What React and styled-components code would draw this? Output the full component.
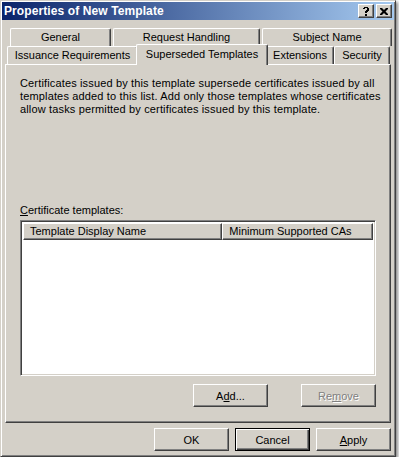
import React from 'react';
import styled, { createGlobalStyle } from 'styled-components';

const GlobalStyle = createGlobalStyle`
  html, body { margin: 0; padding: 0; background: #ffffff; }
  body { font-family: "Liberation Sans", Arial, sans-serif; font-size: 11px; color: #000; }
`;

const Window = styled.div`
  width: 396px;
  height: 457px;
  box-sizing: border-box;
  background: #d4d0c8;
  border: 1px solid;
  border-color: #d4d0c8 #404040 #404040 #d4d0c8;
  box-shadow: inset 1px 1px 0 #fff, inset -1px -1px 0 #808080, 2px 2px 3px rgba(0, 0, 0, 0.45);
  padding: 1px;
  display: flex;
  flex-direction: column;
`;

const TitleBar = styled.div`
  height: 18px;
  display: flex;
  align-items: center;
  background: linear-gradient(to right, #0a246a, #a6caf0);
  padding: 0 2px 0 2px;
`;

const Title = styled.div`
  flex: 1;
  color: #fff;
  font-weight: bold;
  font-size: 12px;
  letter-spacing: 0.1px;
`;

const CaptionButton = styled.div`
  width: 16px;
  height: 14px;
  box-sizing: border-box;
  margin-left: ${(p) => (p.$gap ? 2 : 0)}px;
  background: #d4d0c8;
  border: 1px solid;
  border-color: #fff #404040 #404040 #fff;
  box-shadow: inset -1px -1px 0 #808080;
  display: flex;
  align-items: center;
  justify-content: center;
`;

const Body = styled.div`
  flex: 1;
  display: flex;
  flex-direction: column;
  padding: 8px 1px 0 3px;
`;

const TabRow = styled.div`
  display: flex;
  gap: ${(p) => p.$gap}px;
  padding-left: ${(p) => p.$indent}px;
  height: ${(p) => p.$h}px;
  align-items: flex-end;
  position: relative;
  z-index: ${(p) => p.$z || 0};
`;

const Tab = styled.div`
  width: ${(p) => p.$w}px;
  height: ${(p) => (p.$active ? 21 : 18)}px;
  margin-bottom: ${(p) => (p.$active ? -1 : 0)}px;
  margin-left: ${(p) => (p.$active ? -2 : 0)}px;
  margin-right: ${(p) => (p.$active ? -2 : 0)}px;
  box-sizing: border-box;
  background: #d4d0c8;
  border-top: 1px solid #fff;
  border-left: 1px solid #fff;
  border-right: 1px solid #404040;
  border-radius: 2px 2px 0 0;
  box-shadow: inset -1px 0 0 #808080;
  display: flex;
  justify-content: center;
  padding-top: ${(p) => (p.$active ? 3 : 2)}px;
  white-space: nowrap;
  position: relative;
  z-index: ${(p) => (p.$active ? 2 : 1)};
`;

const Panel = styled.div`
  height: 359px;
  margin-right: 2px;
  box-sizing: border-box;
  border: 1px solid;
  border-color: #fff #404040 #404040 #fff;
  box-shadow: inset -1px -1px 0 #808080;
  padding: 12px 14px 0 14px;
  display: flex;
  flex-direction: column;
`;

const Description = styled.p`
  margin: 0;
  line-height: 13px;
  letter-spacing: 0.15px;
  white-space: nowrap;
`;

const Label = styled.div`
  margin-top: 88px;
  line-height: 13px;
`;

const ListBox = styled.div`
  margin-top: 3px;
  height: 156px;
  box-sizing: border-box;
  background: #fff;
  border: 1px solid;
  border-color: #808080 #fff #fff #808080;
  box-shadow: inset 1px 1px 0 #404040, inset -1px -1px 0 #d4d0c8;
  padding: 2px 2px 0 2px;
`;

const HeaderRow = styled.div`
  display: flex;
  height: 17px;
  background: #fff;
`;

const HeaderCell = styled.div`
  width: ${(p) => p.$w}px;
  box-sizing: border-box;
  background: #d4d0c8;
  border: 1px solid;
  border-color: #fff #404040 #404040 #fff;
  box-shadow: inset -1px -1px 0 #808080;
  padding: 1px 0 0 6px;
  white-space: nowrap;
`;

const ButtonRow = styled.div`
  display: flex;
  justify-content: flex-end;
  gap: ${(p) => p.$gap}px;
  margin-top: ${(p) => p.$top}px;
  padding-right: ${(p) => p.$right || 0}px;
`;

const Button = styled.div`
  width: ${(p) => p.$w || 75}px;
  height: 23px;
  box-sizing: border-box;
  background: #d4d0c8;
  border: 1px solid;
  border-color: ${(p) => (p.$default ? '#000' : '#fff #404040 #404040 #fff')};
  box-shadow: ${(p) =>
    p.$default
      ? 'inset 1px 1px 0 #fff, inset -1px -1px 0 #404040, inset -2px -2px 0 #808080'
      : 'inset -1px -1px 0 #808080'};
  display: flex;
  align-items: center;
  justify-content: center;
  color: ${(p) => (p.$disabled ? '#808080' : '#000')};
  text-shadow: ${(p) => (p.$disabled ? '1px 1px 0 #fff' : 'none')};
`;

const Mn = styled.span`
  text-decoration: underline;
`;

export default function App() {
  return (
    <>
      <GlobalStyle />
      <Window>
        <TitleBar>
          <Title>Properties of New Template</Title>
          <CaptionButton>
            <svg width="8" height="9" viewBox="0 0 8 9">
              <path d="M1 1h1V0h4v1h1v3H6v1H5v1H3V4h1V3h1V1H3v1H1z M3 7h2v2H3z" fill="#000" />
            </svg>
          </CaptionButton>
          <CaptionButton $gap>
            <svg width="8" height="7" viewBox="0 0 8 7">
              <path d="M0 0h2l2 2 2-2h2v1L5.5 3.5 8 6v1H6L4 5 2 7H0V6l2.5-2.5L0 1z" fill="#000" />
            </svg>
          </CaptionButton>
        </TitleBar>
        <Body>
          <TabRow $indent={5} $gap={2} $h={18}>
            <Tab $w={101}>General</Tab>
            <Tab $w={147}>Request Handling</Tab>
            <Tab $w={130}>Subject Name</Tab>
          </TabRow>
          <TabRow $indent={2} $gap={0} $h={18} $z={2}>
            <Tab $w={131}>Issuance Requirements</Tab>
            <Tab $w={132} $active>Superseded Templates</Tab>
            <Tab $w={68}>Extensions</Tab>
            <Tab $w={56}>Security</Tab>
          </TabRow>
          <Panel>
            <Description>
              Certificates issued by this template supersede certificates issued by all
              <br />
              templates added to this list. Add only those templates whose certificates
              <br />
              allow tasks permitted by certificates issued by this template.
            </Description>
            <Label>
              <Mn>C</Mn>ertificate templates:
            </Label>
            <ListBox>
              <HeaderRow>
                <HeaderCell $w={201}>Template Display Name</HeaderCell>
                <HeaderCell $w={152}>Minimum Supported CAs</HeaderCell>
              </HeaderRow>
            </ListBox>
            <ButtonRow $gap={33} $top={8}>
              <Button>
                A<Mn>d</Mn>d...
              </Button>
              <Button $disabled>
                Re<Mn>m</Mn>ove
              </Button>
            </ButtonRow>
          </Panel>
          <ButtonRow $gap={6} $top={5} $right={2}>
            <Button>OK</Button>
            <Button $default>Cancel</Button>
            <Button>
              <Mn>A</Mn>pply
            </Button>
          </ButtonRow>
        </Body>
      </Window>
    </>
  );
}
